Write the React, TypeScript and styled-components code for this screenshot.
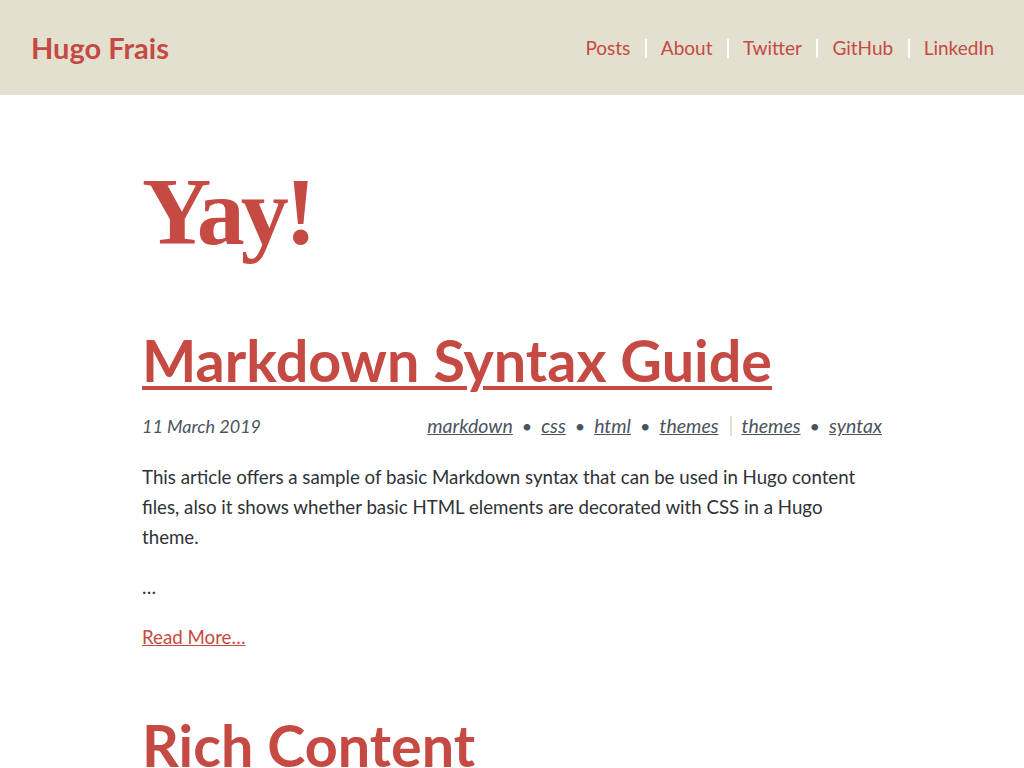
import * as React from "react";
import styled, { createGlobalStyle } from "styled-components";

const RED = "#c54a43";

const GlobalStyle = createGlobalStyle`
  html, body {
    margin: 0;
    padding: 0;
    background: #ffffff;
  }
  body {
    font-family: Lato, "Open Sans", sans-serif;
    color: #2f3236;
  }
  * {
    box-sizing: border-box;
  }
`;

const navItems = ["Posts", "About", "Twitter", "GitHub", "LinkedIn"];
const tags = ["markdown", "css", "html", "themes"];
const series = ["themes", "syntax"];

const App = () => {
  return (
    <>
      <GlobalStyle />
      <Header>
        <Logo href="#">Hugo Frais</Logo>
        <Nav>
          {navItems.map((item, i) => (
            <React.Fragment key={item}>
              {i > 0 && <NavSep />}
              <NavLink href="#">{item}</NavLink>
            </React.Fragment>
          ))}
        </Nav>
      </Header>
      <Main>
        <Hero>Yay!</Hero>
        <Article>
          <PostTitle>
            <TitleLink href="#" $underline>
              Markdown Syntax Guide
            </TitleLink>
          </PostTitle>
          <Meta>
            <PostDate>11 March 2019</PostDate>
            <Tags>
              {tags.map((t, i) => (
                <React.Fragment key={"t" + i}>
                  {i > 0 && <Dot>•</Dot>}
                  <Tag href="#">{t}</Tag>
                </React.Fragment>
              ))}
              <TagSep />
              {series.map((t, i) => (
                <React.Fragment key={"s" + i}>
                  {i > 0 && <Dot>•</Dot>}
                  <Tag href="#">{t}</Tag>
                </React.Fragment>
              ))}
            </Tags>
          </Meta>
          <Para>
            This article offers a sample of basic Markdown syntax that can be
            used in Hugo content files, also it shows whether basic HTML
            elements are decorated with CSS in a Hugo theme.
          </Para>
          <Para>…</Para>
          <Para>
            <ReadMore href="#">Read More…</ReadMore>
          </Para>
        </Article>
        <Article>
          <PostTitle>
            <TitleLink href="#">Rich Content</TitleLink>
          </PostTitle>
        </Article>
      </Main>
    </>
  );
};

const Header = styled.header`
  height: 95px;
  background-color: #e3e0cf;
  display: flex;
  align-items: center;
  justify-content: space-between;
  padding: 0 30px 0 31px;
`;

const Logo = styled.a`
  font-size: 29px;
  font-weight: bold;
  color: ${RED};
  text-decoration: none;
`;

const Nav = styled.nav`
  display: flex;
  align-items: center;
`;

const NavLink = styled.a`
  font-size: 19px;
  color: ${RED};
  text-decoration: none;
`;

const NavSep = styled.span`
  width: 2px;
  height: 19px;
  background: #ffffff;
  margin: 2px 14px 0 14.5px;
`;

const Main = styled.main`
  max-width: 740px;
  margin: 0 auto;
  overflow: hidden;
`;

const Hero = styled.h1`
  font-family: "Liberation Serif", "DejaVu Serif", serif;
  font-weight: bold;
  font-size: 96px;
  line-height: 1;
  color: ${RED};
  margin: 69px 0 0 0;
  letter-spacing: -4px;
`;

const Article = styled.article`
  margin-top: 68px;

  & + & {
    margin-top: 61px;
  }
`;

const PostTitle = styled.h2`
  font-size: 57.5px;
  font-weight: bold;
  line-height: 1.1;
  margin: 0;
`;

const TitleLink = styled.a<{ $underline?: boolean }>`
  color: ${RED};
  text-decoration: ${(p) => (p.$underline ? "underline" : "none")};
  text-decoration-thickness: 4px;
  text-underline-offset: 4px;
`;

const Meta = styled.div`
  display: flex;
  justify-content: space-between;
  align-items: baseline;
  margin: 23px 0 24px 0;
  font-size: 18px;
  line-height: 24px;
  color: #4a5461;
`;

const PostDate = styled.span`
  font-style: italic;
`;

const Tags = styled.div`
  display: flex;
  align-items: baseline;
`;

const Tag = styled.a`
  color: #4a5461;
  font-style: italic;
  font-size: 19.5px;
  text-decoration: underline;
`;

const Dot = styled.span`
  margin: 0 9px;
  font-size: 18px;
`;

const TagSep = styled.span`
  align-self: center;
  width: 2px;
  height: 20px;
  background: #e3e0cf;
  margin: 0 10px 0 11px;
`;

const Para = styled.p`
  font-size: 18.7px;
  line-height: 30px;
  margin: 20px 0 0 0;
`;

const ReadMore = styled.a`
  color: ${RED};
  text-decoration: underline;
`;

export default App;
